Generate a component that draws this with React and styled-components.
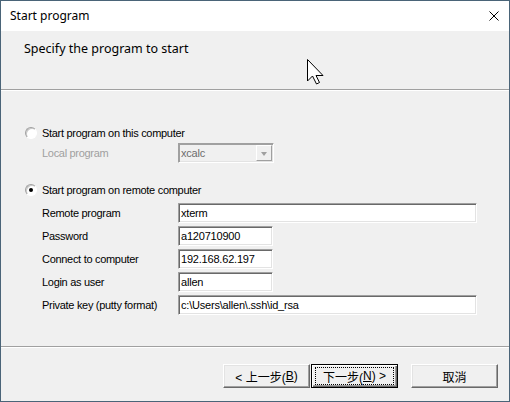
import React from "react";
import styled, { createGlobalStyle } from "styled-components";

const GlobalStyle = createGlobalStyle`
  html, body {
    margin: 0;
    padding: 0;
    background: #f0f0f0;
  }
  * {
    box-sizing: border-box;
  }
`;

const Window = styled.div`
  position: relative;
  width: 510px;
  height: 402px;
  border: 1px solid #4a6478;
  background: #f0f0f0;
  display: flex;
  flex-direction: column;
  overflow: hidden;
`;

const TitleBar = styled.div`
  height: 30px;
  flex: none;
  background: #fff;
  display: flex;
  align-items: center;
  justify-content: space-between;
  padding: 0 10px 1px 9px;
  font-family: "Noto Sans", "Open Sans", sans-serif;
  font-size: 12px;
  color: #000;
`;

const CloseButton = styled.div`
  width: 10px;
  height: 10px;
  display: flex;
  margin-top: 1px;
`;

const Header = styled.div`
  height: 58px;
  flex: none;
  padding: 9px 0 0 23px;
  font-family: "Noto Sans", "Open Sans", sans-serif;
  font-size: 12.5px;
  color: #000;
`;

const Separator = styled.div`
  height: 2px;
  flex: none;
  border-top: 1px solid #a0a0a0;
  border-bottom: 1px solid #fff;
`;

const Content = styled.div`
  flex: 1;
  padding: 32px 0 0 24px;
  display: flex;
  flex-direction: column;
  font-family: "Liberation Sans", Arial, sans-serif;
  font-size: 11px;
  letter-spacing: -0.3px;
  color: #000;
`;

const Group = styled.div`
  display: flex;
  flex-direction: column;
  gap: ${(p) => p.$gap || 0}px;
  margin-top: ${(p) => p.$top || 0}px;
`;

const RadioRow = styled.label`
  height: 20px;
  display: flex;
  align-items: center;
  gap: 5px;
`;

const Radio = styled.span`
  position: relative;
  width: 12px;
  height: 12px;
  border-radius: 50%;
  background: #fff;
  border: 1px solid;
  border-color: #a0a0a0 #fff #fff #a0a0a0;
  box-shadow: inset 1px 1px 0 #c8c8c8;
  &::after {
    content: "";
    display: ${(p) => (p.$checked ? "block" : "none")};
    position: absolute;
    left: 3px;
    top: 3px;
    width: 4px;
    height: 4px;
    border-radius: 50%;
    background: #000;
  }
`;

const FieldRow = styled.div`
  height: 20px;
  display: grid;
  grid-template-columns: 136px auto;
  align-items: center;
  padding-left: 17px;
`;

const Label = styled.span`
  color: ${(p) => (p.$disabled ? "#a0a0a0" : "#000")};
`;

const TextBox = styled.div`
  width: ${(p) => p.$w}px;
  height: 20px;
  background: #fff;
  border: 1px solid;
  border-color: #a0a0a0 #fff #fff #a0a0a0;
  box-shadow: inset 1px 1px 0 #696969, inset -1px -1px 0 #e3e3e3;
  padding: 0 2px;
  display: flex;
  align-items: center;
  font-family: "Liberation Sans", Arial, sans-serif;
  font-size: 11px;
  letter-spacing: -0.2px;
  color: #000;
  white-space: nowrap;
`;

const Combo = styled(TextBox)`
  background: #f0f0f0;
  color: #6d6d6d;
  justify-content: space-between;
  padding-right: 1px;
  box-shadow: inset 1px 1px 0 #a0a0a0, inset -1px -1px 0 #e3e3e3;
`;

const ComboArrow = styled.span`
  width: 16px;
  height: 16px;
  border: 1px solid;
  border-color: #fff #a0a0a0 #a0a0a0 #fff;
  background: #f0f0f0;
  display: flex;
  align-items: center;
  justify-content: center;
  &::before {
    content: "";
    border-left: 3.5px solid transparent;
    border-right: 3.5px solid transparent;
    border-top: 4px solid #a0a0a0;
    margin-top: 1px;
  }
`;

const Footer = styled.div`
  height: 53px;
  flex: none;
  display: flex;
  justify-content: flex-end;
  align-items: flex-start;
  padding: 16px 11px 0 0;
`;

const Button = styled.button`
  width: 87px;
  height: 24px;
  margin-left: ${(p) => p.$gap || 0}px;
  padding: 0;
  background: #f0f0f0;
  border: 1px solid;
  border-color: ${(p) =>
    p.$default ? "#000" : "#fff #696969 #696969 #fff"};
  box-shadow: ${(p) =>
    p.$default
      ? "inset 1px 1px 0 #fff, inset -1px -1px 0 #696969, inset -2px -2px 0 #a0a0a0"
      : "inset -1px -1px 0 #a0a0a0, inset 1px 1px 0 #e3e3e3"};
  font-family: "Liberation Sans", "Noto Sans CJK TC", sans-serif;
  font-size: 12px;
  color: #000;
  display: flex;
  align-items: center;
  justify-content: center;
`;

const FocusRing = styled.span`
  display: flex;
  align-items: center;
  justify-content: center;
  width: 77px;
  height: 16px;
  outline: 1px dotted #000;
`;

const Cursor = styled.svg`
  position: absolute;
  left: 305px;
  top: 57px;
`;

const fields = [
  { label: "Remote program", value: "xterm", w: 299 },
  { label: "Password", value: "a120710900", w: 95 },
  { label: "Connect to computer", value: "192.168.62.197", w: 95 },
  { label: "Login as user", value: "allen", w: 95 },
  { label: "Private key (putty format)", value: "c:\\Users\\allen\\.ssh\\id_rsa", w: 299 },
];

export default function App() {
  return (
    <>
      <GlobalStyle />
      <Window>
        <TitleBar>
          <span>Start program</span>
          <CloseButton>
            <svg width="10" height="10" viewBox="0 0 10 10">
              <path d="M0.5 0.5 L9.5 9.5 M9.5 0.5 L0.5 9.5" stroke="#000" strokeWidth="1" />
            </svg>
          </CloseButton>
        </TitleBar>
        <Header>Specify the program to start</Header>
        <Separator />
        <Content>
          <Group>
            <RadioRow>
              <Radio />
              Start program on this computer
            </RadioRow>
            <FieldRow>
              <Label $disabled>Local program</Label>
              <Combo $w={96}>
                <span>xcalc</span>
                <ComboArrow />
              </Combo>
            </FieldRow>
          </Group>
          <Group $top={17} $gap={3}>
            <RadioRow>
              <Radio $checked />
              Start program on remote computer
            </RadioRow>
            {fields.map((f) => (
              <FieldRow key={f.label}>
                <Label>{f.label}</Label>
                <TextBox $w={f.w}>{f.value}</TextBox>
              </FieldRow>
            ))}
          </Group>
        </Content>
        <Separator />
        <Footer>
          <Button>
            &lt; 上一步(<u>B</u>)
          </Button>
          <Button $default $gap={1}>
            <FocusRing>
              下一步(<u>N</u>) &gt;
            </FocusRing>
          </Button>
          <Button $gap={13}>取消</Button>
        </Footer>
        <Cursor width="20" height="28" viewBox="0 0 20 28">
          <path
            d="M1.5 1.5 L1.5 23 L6.5 18 L10.5 26 L13.5 24.5 L10 17.5 L17 17.5 Z"
            fill="#fff"
            stroke="#000"
            strokeWidth="1"
            strokeLinejoin="miter"
          />
        </Cursor>
      </Window>
    </>
  );
}
